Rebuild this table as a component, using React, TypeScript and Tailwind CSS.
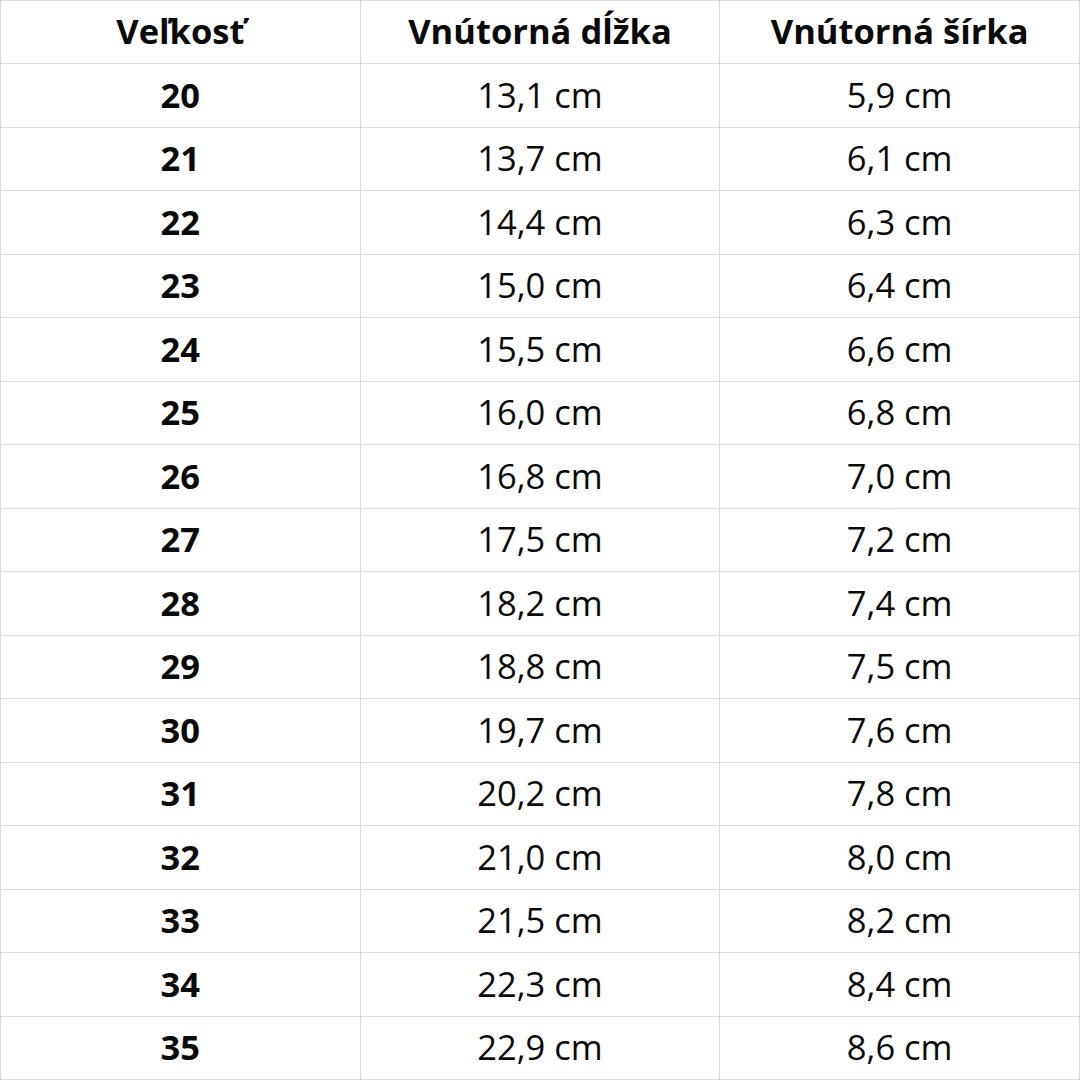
const rows: [string, string, string][] = [
  ["20", "13,1 cm", "5,9 cm"],
  ["21", "13,7 cm", "6,1 cm"],
  ["22", "14,4 cm", "6,3 cm"],
  ["23", "15,0 cm", "6,4 cm"],
  ["24", "15,5 cm", "6,6 cm"],
  ["25", "16,0 cm", "6,8 cm"],
  ["26", "16,8 cm", "7,0 cm"],
  ["27", "17,5 cm", "7,2 cm"],
  ["28", "18,2 cm", "7,4 cm"],
  ["29", "18,8 cm", "7,5 cm"],
  ["30", "19,7 cm", "7,6 cm"],
  ["31", "20,2 cm", "7,8 cm"],
  ["32", "21,0 cm", "8,0 cm"],
  ["33", "21,5 cm", "8,2 cm"],
  ["34", "22,3 cm", "8,4 cm"],
  ["35", "22,9 cm", "8,6 cm"],
];

const cell =
  "flex items-center justify-center pb-[1px] border-r border-b border-[#dcdcdc] text-[34.5px] leading-none";

export default function App() {
  return (
    <div className="w-[1080px] h-[1080px] bg-white text-[#0a0a0a] font-['Open_Sans',sans-serif]">
      <div className="grid h-full grid-cols-3 grid-rows-[repeat(17,minmax(0,1fr))] border-t border-l border-[#dcdcdc]">
        <div className={`${cell} font-bold`}>Veľkosť</div>
        <div className={`${cell} font-bold`}>Vnútorná dĺžka</div>
        <div className={`${cell} font-bold`}>Vnútorná šírka</div>
        {rows.map(([size, len, wid]) => (
          <div key={size} className="contents">
            <div className={`${cell} font-bold`}>{size}</div>
            <div className={cell}>{len}</div>
            <div className={cell}>{wid}</div>
          </div>
        ))}
      </div>
    </div>
  );
}
